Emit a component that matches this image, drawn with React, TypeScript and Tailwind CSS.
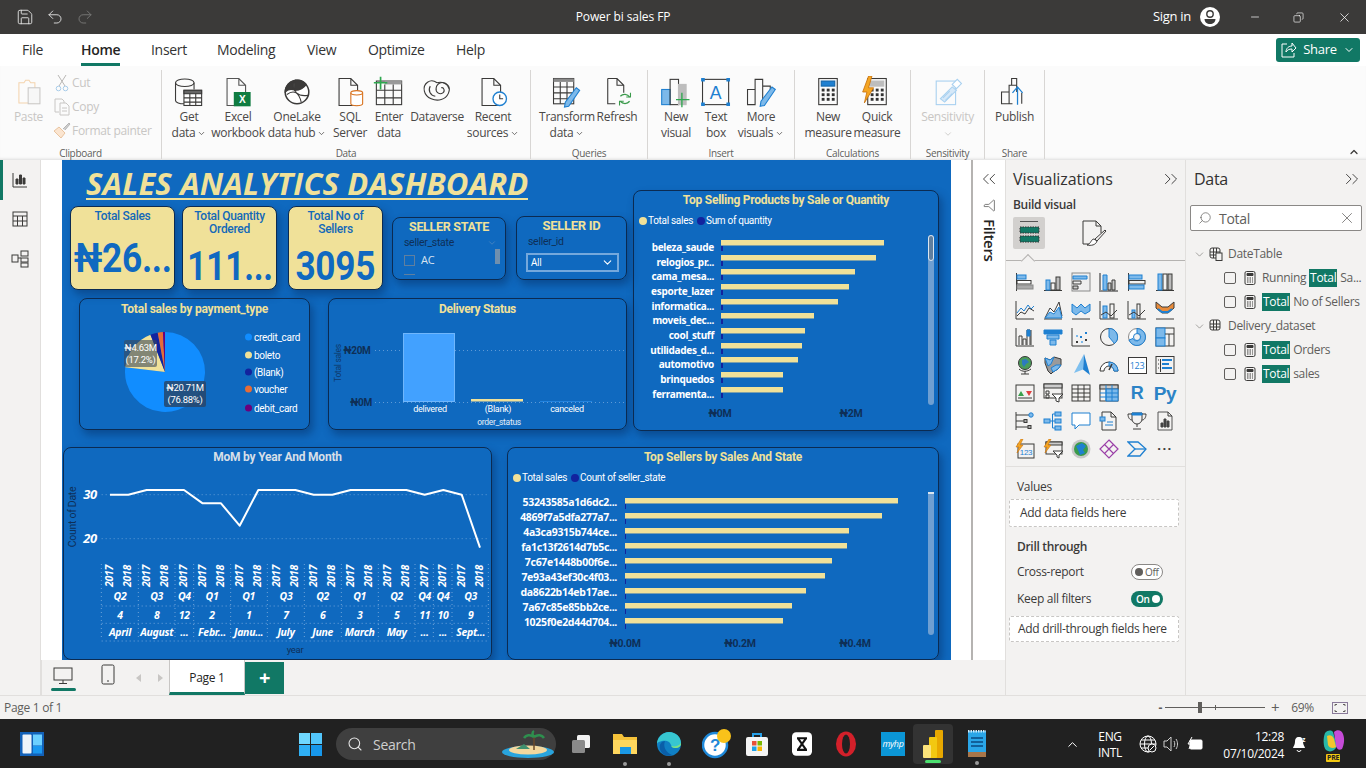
import React from "react";
import { ChevronDown, ChevronUp, ChevronsLeft, ChevronsRight, Copy, Funnel, Minus, Redo2, Save, Search, Undo2, X } from "lucide-react";

const D = "#3b3a39", B = "#1f80d1", L = "#7db9ea";

/* ---------- ribbon icons ---------- */
const S = ({ children, w = 32, h = 32, vb = "0 0 38 38", className = "" }: any) => (
  <svg width={w} height={h} viewBox={vb} fill="none" stroke={D} strokeWidth="1.300" className={className}>{children}</svg>
);
const FileOutline = ({ c = D }: any) => <path d="M6 3h14l8 8v24H6z M20 3v8h8" stroke={c} />;
const GetData = () => (
  <S>
    <ellipse cx="14" cy="8" rx="11" ry="4.500" />
    <path d="M3 8v21c0 2.500 5 4 10 4" />
    <path d="M25 8v8" />
    <rect x="13" y="17" width="21" height="18" fill="#fff" />
    <rect x="13" y="17" width="21" height="4" fill="#666" />
    <path d="M13 26h21M13 31h21M20 21v14M27 21v14" />
  </S>
);
const Excel = () => (
  <S>
    <FileOutline c="#555" />
    <rect x="14" y="19" width="20" height="17" fill="#107c41" stroke="none" />
    <text x="24" y="32" fontSize="12" fontWeight="700" fill="#fff" stroke="none" textAnchor="middle" fontFamily="Liberation Sans">X</text>
  </S>
);
const OneLake = () => (
  <S>
    <circle cx="19" cy="19" r="14" fill="#fff" strokeWidth="1.800" />
    <path d="M5 19A14 14 0 0 1 17 5c-3 5-2 9 0 12-5-2-9-1-12 2z" fill="#3b3a39" />
    <path d="M17 5c5-1 10 1 13 5-4 6-9 7-13 7 0 0-3-6 0-12z" fill="#3b3a39" />
    <path d="M13 8c2 10 6 17 19 15M7 22c8-6 14-3 17 9" />
  </S>
);
const Sql = () => (
  <S>
    <FileOutline c="#3b3a39" />
    <path d="M20 20v13c0 3 14 3 14 0V20" fill="#fff" stroke="#d9731f" />
    <ellipse cx="27" cy="20" rx="7" ry="2.600" fill="#fff" stroke="#d9731f" />
  </S>
);
const EnterData = () => (
  <S>
    <rect x="4" y="6" width="30" height="28" />
    <rect x="14" y="6" width="20" height="4" fill="#9a9a9a" stroke="none" />
    <path d="M4 17h30M4 26h30M14 10v24M24 10v24" />
    <path d="M9 1v15M1 8h16" stroke="#2fa84f" strokeWidth="2" />
  </S>
);
const Dataverse = () => (
  <S>
    <path d="M19 8c-8-6-17 1-15 10 2 9 13 12 20 10 8-2 12-12 8-17-5-6-13-3-14 3-1 5 4 9 8 6 3-2 1-7-2-6" />
    <path d="M19 8c6-2 13 1 14 7M11 12c-3 5 0 11 6 12" />
  </S>
);
const Recent = () => (
  <S>
    <FileOutline />
    <circle cx="27" cy="27" r="8" fill="#fff" stroke={B} strokeWidth="1.600" />
    <path d="M27 22v5h4" />
  </S>
);
const Transform = () => (
  <S>
    <rect x="3" y="3" width="24" height="30" />
    <rect x="3" y="3" width="24" height="4" fill="#8a8a8a" stroke="none" />
    <path d="M3 13h24M3 20h24M3 27h24M11 7v26M19 7v26" />
    <path d="M30 14l4 3-13 19-5 1 1-6z" fill={L} stroke={B} />
  </S>
);
const Refresh = () => (
  <S>
    <path d="M8 3h11l8 8v9 M8 3v30h9 M19 3v8h8" />
    <path d="M23 24a7 7 0 0 1 11 1M34 30a7 7 0 0 1-11 0" stroke="#3a9a4b" strokeWidth="1.500" />
    <path d="M35 20v5h-5M22 35v-5h5" stroke="#3a9a4b" />
  </S>
);
const NewVisual = () => (
  <S>
    <rect x="2" y="16" width="10" height="18" fill={L} stroke={B} />
    <rect x="12" y="4" width="10" height="30" />
    <rect x="22" y="10" width="9" height="24" fill="#bdbdbd" stroke="#bdbdbd" />
    <path d="M26 20v17M19 28h16" stroke="#2fa84f" strokeWidth="1.600" />
  </S>
);
const TextBox = () => (
  <S>
    <rect x="3" y="4" width="31" height="30" />
    <path d="M2 3h3v3H2zM32 3h3v3h-3zM2 32h3v3H2zM32 32h3v3h-3z" fill={B} stroke={B} />
    <text x="18.500" y="27" fontSize="21" fill={B} stroke="none" textAnchor="middle" fontFamily="Liberation Sans">A</text>
  </S>
);
const MoreVisuals = () => (
  <S>
    <path d="M3 34V16h9v18zM12 34V4h9v30M21 34V12h9v8" />
    <path d="M32 13l4 3-13 19-5 1 1-6z" fill={L} stroke={B} />
  </S>
);
const Calc = ({ top = B, flash = false }: any) => (
  <S>
    <rect x="8" y="3" width="22" height="31" />
    <rect x="11" y="6" width="16" height="6" fill={top} stroke={top === B ? "#1565a8" : top} />
    {[15, 20.500, 26].map((y) => [11.500, 17.500, 23.500].map((x) => <rect key={x + "-" + y} x={x} y={y} width="3.400" height="3.400" fill="#333" stroke="none" />))}
    {flash && <path d="M9 0l-7 19h5l-3 13 11-18h-6l4-14z" fill="#f5a623" stroke="#c9720e" strokeWidth="1" />}
  </S>
);
const Sensitivity = () => (
  <S>
    <rect x="5" y="6" width="23" height="28" stroke="#a9d1f0" />
    <path d="M10 27l14-14 5 4-14 14z" fill="#d5e8f8" stroke="#a9d1f0" />
    <path d="M24 10l6-6 5 5-6 6z" fill="#fff" stroke="#a9d1f0" />
    <path d="M13 26l8-8M16 29l8-8" stroke="#a9d1f0" />
  </S>
);
const Publish = () => (
  <S>
    <path d="M3 33V19h9v14zM12 19V11h9v8M12 33h4M21 11V3h-6v8M27 33V20" />
    <path d="M22 34V14M16 20l6-7 6 7" stroke={B} strokeWidth="1.500" />
  </S>
);

const Chev = () => <ChevronDown size={9} strokeWidth={2} className="inline ml-0.5" />;
const RBtn = ({ w, icon, l1, l2, caret, muted }: any) => (
  <div className={`flex flex-col items-center shrink-0 ${w}`}>
    <div className="h-[33px] flex items-center justify-center">{icon}</div>
    <div className={`text-[12px] leading-[16px] mt-[1px] whitespace-nowrap ${muted ? "text-[#c8c6c4]" : "text-[#4a4847]"}`}>{l1}</div>
    <div className={`text-[12px] leading-[16px] whitespace-nowrap ${muted ? "text-[#c8c6c4]" : "text-[#4a4847]"}`}>{l2}{caret && <Chev />}</div>
  </div>
);
const Group = ({ w, pad, label, children }: any) => (
  <div className={`shrink-0 flex flex-col border-r border-[#d8d6d4] h-[89px] ${w}`}>
    <div className={`flex flex-1 pt-[5px] ${pad}`}>{children}</div>
    <div className="text-[10px] leading-[12px] text-[#605e5c] text-center">{label}</div>
  </div>
);

const ClipRow = ({ icon, children }: any) => (
  <div className="flex items-center h-[19px] text-[12px] text-[#c8c6c4] whitespace-nowrap">
    <span className="w-[21px] flex justify-center">{icon}</span>{children}
  </div>
);

const Ribbon = () => (
  <div className="relative h-[94px] bg-[#fbfbfb] flex items-start pt-[4px] shadow-[inset_0_-3px_3px_-2px_rgba(0,0,0,0.12)]">
    <Group w="w-[162px]" pad="" label="Clipboard">
      <div className="w-[51px] flex flex-col items-center pl-[6px] shrink-0">
        <div className="h-[33px] flex items-center">
          <svg width="28" height="32" viewBox="0 0 30 38" fill="none">
            <path d="M3 8h6l2-3h4l2 3h5v24H3z" stroke="#f4d3ad" strokeWidth="1.200" />
            <rect x="14" y="14" width="14" height="19" fill="#f7f7f7" stroke="#c8c6c4" strokeWidth="1.200" />
          </svg>
        </div>
        <span className="text-[12px] leading-[16px] mt-[1px] text-[#c8c6c4]">Paste</span>
      </div>
      <div className="flex flex-col -mt-[2px] gap-[5px]">
        <ClipRow icon={<svg width="14" height="18" viewBox="0 0 14 18" fill="none"><path d="M3 1l7 11M11 1L4 12" stroke="#b9b7b5" /><circle cx="3.500" cy="14.500" r="2.300" stroke="#a9cdea" /><circle cx="10.500" cy="14.500" r="2.300" stroke="#a9cdea" /></svg>}>Cut</ClipRow>
        <ClipRow icon={<svg width="16" height="18" viewBox="0 0 16 18" fill="none" stroke="#c8c6c4"><path d="M1 1h7l2 2v2M1 1v13h4" /><path d="M6 5h6l3 3v9H6z M8 10h5M8 13h5" /></svg>}>Copy</ClipRow>
        <ClipRow icon={<svg width="18" height="17" viewBox="0 0 18 17" fill="none"><path d="M1 9l7 7 4-5-6-6z" fill="#fbe5d0" stroke="#e9c4a0" /><path d="M10 7l6-6 1 1-5 6" fill="#cfcfcf" stroke="#b5b5b5" /></svg>}>Format painter</ClipRow>
      </div>
    </Group>
    <Group w="w-[369px]" pad="pl-[5px]" label="Data">
      <RBtn w="w-[44px]" icon={<GetData />} l1="Get" l2="data" caret />
      <RBtn w="w-[54px]" icon={<Excel />} l1="Excel" l2="workbook" />
      <RBtn w="w-[64px]" icon={<OneLake />} l1="OneLake" l2="data hub" caret />
      <RBtn w="w-[42px]" icon={<Sql />} l1="SQL" l2="Server" />
      <RBtn w="w-[36px]" icon={<EnterData />} l1="Enter" l2="data" />
      <RBtn w="w-[60px]" icon={<Dataverse />} l1="Dataverse" l2="" />
      <RBtn w="w-[52px]" icon={<Recent />} l1="Recent" l2="sources" caret />
    </Group>
    <Group w="w-[117px]" pad="pl-[6px]" label="Queries">
      <RBtn w="w-[60px]" icon={<Transform />} l1="Transform" l2="data" caret />
      <RBtn w="w-[40px]" icon={<Refresh />} l1="Refresh" l2="" />
    </Group>
    <Group w="w-[147px]" pad="pl-[8px]" label="Insert">
      <RBtn w="w-[40px]" icon={<NewVisual />} l1="New" l2="visual" />
      <RBtn w="w-[40px]" icon={<TextBox />} l1="Text" l2="box" />
      <RBtn w="w-[50px]" icon={<MoreVisuals />} l1="More" l2="visuals" caret />
    </Group>
    <Group w="w-[116px]" pad="pl-[10px]" label="Calculations">
      <RBtn w="w-[46px]" icon={<Calc />} l1="New" l2="measure" />
      <RBtn w="w-[52px]" icon={<Calc top="#bdbdbd" flash />} l1="Quick" l2="measure" />
    </Group>
    <Group w="w-[74px]" pad="" label="Sensitivity">
      <RBtn w="w-full" icon={<Sensitivity />} l1="Sensitivity" l2={<ChevronDown size={10} className="inline" />} muted />
    </Group>
    <Group w="w-[60px]" pad="" label="Share">
      <RBtn w="w-full" icon={<Publish />} l1="Publish" l2="" />
    </Group>
    <ChevronUp size={12} strokeWidth={2.500} className="absolute right-[6px] bottom-[2px] text-[#3b3a39]" />
  </div>
);

/* ---------- title and tabs ---------- */
const TitleBar = () => (
  <div className="h-[34px] bg-[#3b3a39] flex items-center text-white shrink-0 relative">
    <div className="w-[500px] flex items-center pl-[16px] gap-[12px]">
      <Save size={18} strokeWidth={1.200} className="text-[#e5e5e5]" />
      <Undo2 size={18} strokeWidth={1.200} className="text-[#e5e5e5]" />
      <Redo2 size={18} strokeWidth={1.200} className="text-[#7b7a79]" />
    </div>
    <div className="w-[246px] text-center text-[12px] tracking-[-0.1px]">Power bi sales FP</div>
    <div className="flex-1 flex items-center justify-end">
      <span className="text-[13px]">Sign in</span>
      <svg width="20" height="20" viewBox="0 0 20 20" className="ml-[9px] mr-[29px]"><circle cx="10" cy="10" r="10" fill="#fff" /><circle cx="10" cy="7" r="3.200" fill="none" stroke="#3b3a39" strokeWidth="1.400" /><path d="M4.500 12h11c0 3-2.500 5-5.500 5s-5.500-2-5.500-5z" fill="#3b3a39" /></svg>
      <Minus size={12} className="mr-[32px]" strokeWidth={1.400} />
      <Copy size={11} className="mr-[33px] -scale-x-100" strokeWidth={1.400} />
      <X size={15} className="mr-[14px]" strokeWidth={1.200} />
    </div>
  </div>
);
const Tabs = () => {
  const items: [string, string][] = [["File", "w-[81px] pl-[22px]"], ["Home", "w-[70px]"], ["Insert", "w-[66px]"], ["Modeling", "w-[90px]"], ["View", "w-[61px]"], ["Optimize", "w-[88px]"], ["Help", "w-[60px]"]];
  return (
    <div className="h-[32px] bg-white flex items-center shrink-0 relative">
      {items.map(([t, w]) => (
        <div key={t} className={`${w} h-full flex items-center`}>
          <span className={`relative text-[14px] text-[#333] leading-[32px] ${t === "Home" ? "font-semibold text-[#252423]" : ""}`}>
            {t}
            {t === "Home" && <span className="absolute left-0 right-0 bottom-[0px] h-[3px] bg-[#117865]" />}
          </span>
        </div>
      ))}
      <div className="ml-auto mr-[6px] w-[84px] h-[24px] rounded-[3px] bg-[#117865] text-white flex items-center justify-center gap-[6px] text-[13px]">
        <svg width="16" height="16" viewBox="0 0 16 16" fill="none" stroke="#fff" strokeWidth="1"><path d="M6 2H1v13h12v-4" /><path d="M5 10c0-4 3-6 6-6V1l4 5-4 4V7c-3 0-5 1-6 3z" /></svg>
        Share<ChevronDown size={12} />
      </div>
    </div>
  );
};

/* ---------- left nav ---------- */
const LeftNav = () => (
  <div className="w-[41px] shrink-0 bg-[#f3f2f1] border-r border-[#e1dfdd] flex flex-col items-center relative">
    <div className="absolute left-0 top-0 w-[3px] h-[40px] bg-[#117865]" />
    <svg width="16" height="16" viewBox="0 0 16 16" fill="none" stroke={D} className="mt-[12px]"><path d="M1 1v14h14" /><path d="M4 12V7h2v5zM7.500 12V3h2v9zM11 12V6h2v6z" fill={D} /></svg>
    <svg width="16" height="16" viewBox="0 0 16 16" fill="none" stroke={D} className="mt-[23px]"><rect x="1" y="1" width="14" height="14" /><path d="M1 5h14M1 10h14M5.500 5v10M10.500 5v10" /></svg>
    <svg width="18" height="18" viewBox="0 0 18 18" fill="none" stroke={D} className="mt-[23px]"><rect x="1" y="5" width="6" height="7" /><rect x="10" y="1" width="7" height="5" /><rect x="10" y="8" width="7" height="4" /><rect x="10" y="13" width="7" height="4" /><path d="M7 8h3" /></svg>
  </div>
);

/* ---------- canvas ---------- */
const INK = "font-['Roboto',sans-serif]";
const mkT = (ox: number, oy: number) => ({ x, y, c, r, children }: any) => (
  <span
    className={`absolute whitespace-nowrap -translate-x-1/2 -translate-y-1/2 ${r ? "-rotate-90" : ""} ${c || ""}`}
    style={{ left: x - ox, top: y - oy }}
  >{children}</span>
);
const Visual = ({ cls, children }: any) => (
  <div className={`absolute border border-[#0b2b52] rounded-[8px] shadow-[3px_5px_8px_rgba(4,40,90,0.45)] ${cls}`}>{children}</div>
);

const Kpi = ({ cls, title, value, vcls }: any) => (
  <Visual cls={`bg-[#f0e199] flex flex-col ${cls}`}>
    <div className="text-[12px] leading-[13px] font-medium text-center text-[#1469b8] pt-[3px] h-[32px] font-['Roboto',sans-serif]">
      {title.map((t: string) => <div key={t}>{t}</div>)}
    </div>
    <div className="flex-1 flex items-center justify-center">
      <span className={`font-bold text-[#1069c0] text-[40px] leading-none whitespace-nowrap font-['Roboto',sans-serif] ${vcls}`}>{value}</span>
    </div>
  </Visual>
);

const Legend2 = ({ second }: any) => (
  <div className={`flex items-center text-[10px] text-white ${INK}`}>
    <span className="w-[8px] h-[8px] rounded-full bg-[#f0e199] mr-[1px]" /><span className="mr-[4px]">Total sales</span>
    <span className="w-[8px] h-[8px] rounded-full bg-[#12239e] mr-[1px]" /><span>{second}</span>
  </div>
);

const Pie = () => {
  const arc = (a0: number, a1: number, fill: string) => {
    const r = 40, cx = 41, cy = 41;
    const p = (a: number) => [cx + r * Math.sin((a * Math.PI) / 180), cy - r * Math.cos((a * Math.PI) / 180)];
    const [x0, y0] = p(a0), [x1, y1] = p(a1);
    return <path key={fill} d={`M${cx} ${cy}L${x0} ${y0}A${r} ${r} 0 ${a1 - a0 > 180 ? 1 : 0} 1 ${x1} ${y1}Z`} fill={fill} />;
  };
  return (
    <svg width="82" height="82" viewBox="0 0 82 82" className="absolute left-[44px] top-[32px]">
      {arc(0, 276.800, "#118dff")}{arc(276.800, 338.700, "#f0e199")}{arc(338.700, 349.500, "#12239e")}{arc(349.500, 357, "#e66c37")}{arc(357, 360, "#6b007b")}
    </svg>
  );
};

const PieCard = () => {
  const legend: [string, string, number][] = [["credit_card", "bg-[#118dff]", 337], ["boleto", "bg-[#f0e199]", 355], ["(Blank)", "bg-[#12239e]", 372], ["voucher", "bg-[#e66c37]", 389], ["debit_card", "bg-[#6b007b]", 408]];
  return (
    <Visual cls="left-[17px] top-[138px] w-[231px] h-[132px]">
      <div className={`text-center text-[12px] font-bold text-[#f0e199] leading-[20px] ${INK} tracking-[-0.2px]`}>Total sales by payment_type</div>
      <Pie />
      <div className={`absolute left-[44px] top-[41px] w-[33px] h-[27px] rounded-[2px] bg-[#3b4a5e]/60 text-white text-[9.500px] leading-[11.500px] text-center pt-[2px] ${INK}`}>₦4.63M<br />(17.2%)</div>
      <div className={`absolute left-[84px] top-[82px] w-[42px] h-[26px] rounded-[2px] bg-[#27476b]/85 text-white text-[9.500px] leading-[11.500px] text-center pt-[1px] ${INK}`}>₦20.71M<br />(76.88%)</div>
      {legend.map(([l, c, y]) => (
        <div key={l} className={`absolute flex items-center gap-[2px] -translate-y-1/2 text-white text-[10px] ${INK}`} style={{ left: 165, top: y - 299 }}>
          <span className={`w-[7px] h-[7px] rounded-full ${c}`} />{l}
        </div>
      ))}
    </Visual>
  );
};

const DeliveryCard = () => {
  const T = mkT(329, 299);
  return (
    <Visual cls="left-[266px] top-[138px] w-[299px] h-[132px]">
      <div className={`text-center text-[12px] font-bold text-[#f0e199] leading-[20px] ${INK}`}>Delivery Status</div>
      <svg width="297" height="130" className="absolute left-0 top-0" fill="none">
        <path d="M46 51.500H296M46 103.500H296" stroke="#5f9ad6" strokeDasharray="1 3" />
      </svg>
      <span className="absolute left-[74px] top-[34px] w-[52px] h-[69px] bg-[#42a1ff] border border-[#6fb6fc]" />
      <span className="absolute left-[142px] top-[100px] w-[52px] h-[3px] bg-[#f0e199] border-b border-[#84a4ad]" />
      <span className="absolute left-[211px] top-[102px] w-[52px] h-[1px] bg-[#2384e0]" />
      <T x={357} y={350} c={`font-bold text-[10px] text-[#0e2f57] ${INK}`}>₦20M</T>
      <T x={361} y={402} c={`font-bold text-[10px] text-[#0e2f57] ${INK}`}>₦0M</T>
      <T x={338} y={363} r c={`text-[8.500px] text-[#0e3a6c] ${INK}`}>Total sales</T>
      <T x={430} y={410} c={`text-[9px] text-white ${INK}`}>delivered</T>
      <T x={498} y={410} c={`text-[9px] text-white ${INK}`}>(Blank)</T>
      <T x={567} y={410} c={`text-[9px] text-white ${INK}`}>canceled</T>
      <T x={499} y={422} c={`text-[8.500px] text-[#e3edf7] ${INK}`}>order_status</T>
    </Visual>
  );
};

const prods: [string, number][] = [["beleza_saude", 884], ["relogios_pr...", 876], ["cama_mesa...", 855], ["esporte_lazer", 849], ["informatica...", 838], ["moveis_dec...", 814], ["cool_stuff", 805], ["utilidades_d...", 802], ["automotivo", 798], ["brinquedos", 783], ["ferramenta...", 783]];
const sellers: [string, number][] = [["53243585a1d6dc2...", 898], ["4869f7a5dfa277a7...", 882], ["4a3ca9315b744ce...", 849], ["fa1c13f2614d7b5c...", 847], ["7c67e1448b00f6e...", 832], ["7e93a43ef30c4f03...", 825], ["da8622b14eb17ae...", 806], ["7a67c85e85bb2ce...", 792], ["1025f0e2d44d704...", 783]];

const ProductsCard = () => {
  const T = mkT(634, 191);
  return (
    <Visual cls="left-[571px] top-[30px] w-[306px] h-[241px]">
      <div className={`text-center text-[12px] font-bold text-[#f0e199] leading-[19px] ${INK} tracking-[-0.25px]`}>Top Selling Products by Sale or Quantity</div>
      <div className="absolute left-[5px] top-[22px]"><Legend2 second="Sum of quantity" /></div>
      {prods.map(([l, end], i) => (
        <React.Fragment key={l}>
          <span className="absolute h-[6px] bg-[#f0e199] border-b border-[#7ea0a8]" style={{ left: 87, top: 49 + i * 14.670, width: end - 721 }} />
          <span className="absolute w-[2px] h-[5px] bg-[#12239e]" style={{ left: 87, top: 55 + i * 14.670 }} />
          <span className="absolute right-[224px] -translate-y-1/2 whitespace-nowrap text-white font-bold text-[10px] font-['Noto_Sans',sans-serif]" style={{ top: 56 + i * 14.670 }}>{l}</span>
        </React.Fragment>
      ))}
      <span className="absolute left-[294px] top-[44px] w-[6px] h-[170px] rounded-[3px] bg-[#6e9fd2]" />
      <span className="absolute left-[294px] top-[44px] w-[6px] h-[26px] rounded-[3px] bg-[#5f7f9f] border border-[#dbe6f0]" />
      <T x={720} y={414} c={`font-bold text-[10.500px] text-[#0e2f57] ${INK}`}>₦0M</T>
      <T x={851} y={414} c={`font-bold text-[10.500px] text-[#0e2f57] ${INK}`}>₦2M</T>
    </Visual>
  );
};

const SellersCard = () => {
  const T = mkT(508, 448);
  return (
    <Visual cls="left-[445px] top-[287px] w-[432px] h-[213px]">
      <div className={`text-center text-[12px] font-bold text-[#f0e199] leading-[19px] ${INK} tracking-[-0.2px]`}>Top Sellers by Sales And State</div>
      <div className="absolute left-[5px] top-[22px]"><Legend2 second="Count of seller_state" /></div>
      {sellers.map(([l, end], i) => (
        <React.Fragment key={l}>
          <span className="absolute h-[6px] bg-[#f0e199] border-b border-[#7ea0a8]" style={{ left: 117, top: 50 + i * 15, width: end - 625 }} />
          <span className="absolute w-[1px] h-[5px] bg-[#12239e]" style={{ left: 117, top: 56 + i * 15 }} />
          <span className="absolute right-[321px] -translate-y-1/2 whitespace-nowrap text-white font-bold text-[10.500px] font-['Noto_Sans',sans-serif]" style={{ top: 55 + i * 15 }}>{l}</span>
        </React.Fragment>
      ))}
      <span className="absolute left-[420px] top-[44px] w-[6px] h-[143px] rounded-[3px] bg-[#6e9fd2]" />
      <span className="absolute left-[420px] top-[44px] w-[6px] h-[2px] bg-[#dbe6f0]" />
      <T x={625} y={644} c={`font-bold text-[10.500px] text-[#0e2f57] ${INK}`}>₦0.0M</T>
      <T x={740} y={644} c={`font-bold text-[10.500px] text-[#0e2f57] ${INK}`}>₦0.2M</T>
      <T x={855} y={644} c={`font-bold text-[10.500px] text-[#0e2f57] ${INK}`}>₦0.4M</T>
    </Visual>
  );
};

const MomCard = () => {
  const ox = 64, oy = 448;
  const T = mkT(ox, oy);
  const xs = [150, 205, 260, 316, 372, 428, 483, 539, 595, 650, 706, 761, 817, 872, 928, 983, 1039, 1094, 1150, 1205, 1260];
  const ys = [164, 164, 150, 150, 150, 190, 190, 257, 150, 150, 150, 164, 164, 150, 150, 150, 150, 164, 150, 164, 323];
  const px = (v: number) => 60 + v / 3 - ox;
  const py = (v: number) => 440 + v / 3 - oy;
  const line = xs.map((x, i) => `${px(x)},${py(ys[i])}`).join(" ");
  const seps = [124, 235, 345, 401, 512, 622, 733, 844, 955, 1065, 1120, 1176, 1285];
  const yrs = ["2017", "2018", "2017", "2018", "2017", "2017", "2018", "2017", "2018", "2017", "2018", "2017", "2018", "2017", "2018", "2017", "2018", "2017", "2017", "2017", "2018"];
  const q: [string, number][] = [["Q2", 180], ["Q3", 290], ["Q4", 373], ["Q1", 456], ["Q1", 566], ["Q3", 678], ["Q2", 788], ["Q1", 899], ["Q2", 1010], ["Q4", 1094], ["Q4", 1149], ["Q3", 1232]];
  const n = ["4", "8", "12", "2", "1", "7", "6", "3", "5", "11", "10", "9"];
  const m = ["April", "August", "...", "Febr...", "Janu...", "July", "June", "March", "May", "...", "...", "Sept..."];
  const it = `italic font-bold text-white text-[10.500px] font-['Noto_Sans',sans-serif]`;
  return (
    <Visual cls="left-[1px] top-[287px] w-[429px] h-[213px]">
      <div className={`text-center text-[12px] font-bold text-[#d6dfe8] leading-[19px] ${INK} tracking-[-0.2px]`}>MoM by Year And Month</div>
      <svg width="427" height="211" className="absolute left-0 top-0" fill="none">
        <path d={`M${px(125)} ${py(164)}H${px(1285)}M${px(125)} ${py(296)}H${px(1285)}`} stroke="#5f9ad6" strokeDasharray="1 3" />
        {seps.map((s) => <path key={s} d={`M${px(s)} ${py(372)}V${py(600)}`} stroke="#6ea3da" strokeDasharray="1 3" />)}
        {[498, 550, 603].map((s) => <path key={s} d={`M${px(125)} ${py(s)}H${px(1285)}`} stroke="#6ea3da" strokeDasharray="1 3" />)}
        <polyline points={line} stroke="#fff" strokeWidth="2" strokeLinejoin="round" />
      </svg>
      <T x={90} y={495} c={`italic font-bold text-white text-[13px] font-['Noto_Sans',sans-serif]`}>30</T>
      <T x={90} y={539} c={`italic font-bold text-white text-[13px] font-['Noto_Sans',sans-serif]`}>20</T>
      <T x={73} y={517} r c={`text-[10.500px] text-[#0e2f57] ${INK}`}>Count of Date</T>
      {xs.map((x, i) => <T key={x} x={60 + x / 3} y={576} r c={it}>{yrs[i]}</T>)}
      {q.map(([t, x]) => <T key={x} x={60 + x / 3} y={597} c={it}>{t}</T>)}
      {q.map(([, x], i) => <T key={x} x={60 + x / 3} y={616} c={it}>{n[i]}</T>)}
      {q.map(([, x], i) => <T key={x} x={60 + x / 3} y={633} c={it}>{m[i]}</T>)}
      <T x={295} y={650} c={`text-[9.500px] text-[#0e2f57] ${INK}`}>year</T>
    </Visual>
  );
};

const Canvas = () => (
  <div className="flex-1 bg-white pl-[21px] pr-[20px]">
    <div className="relative w-[889px] h-[500px] bg-[#0f69bf] overflow-hidden">
      <div className="absolute left-[24px] top-[8px] text-[31px] leading-[30px] font-bold italic text-[#f0e199] border-b-[2px] border-[#f0e199] whitespace-nowrap font-['Open_Sans',sans-serif] tracking-[0.15px]">SALES ANALYTICS DASHBOARD</div>
      <Kpi cls="left-[8px] top-[46px] w-[105px] h-[84px]" title={["Total Sales"]} value="₦26..." vcls="scale-x-[0.88] -translate-y-[5px]" />
      <Kpi cls="left-[120px] top-[46px] w-[95px] h-[84px]" title={["Total Quantity", "Ordered"]} value="111..." vcls="scale-x-[0.84] pt-[6px]" />
      <Kpi cls="left-[226px] top-[46px] w-[95px] h-[84px]" title={["Total No of", "Sellers"]} value="3095" vcls="scale-x-[0.88] pt-[6px]" />
      <Visual cls="left-[330px] top-[57px] w-[114px] h-[63px]">
        <div className={`text-center text-[12.500px] font-bold text-[#f0e199] leading-[18px] ${INK}`}>SELLER STATE</div>
        <div className={`flex items-center justify-between pl-[11px] pr-[8px] text-[10.500px] leading-[14px] text-[#0e2f57] ${INK}`}>seller_state<ChevronDown size={10} className="text-[#4a85c0]" /></div>
        <div className="flex items-center gap-[6px] pl-[11px] mt-[3px] text-[11px] leading-[14px] text-[#d7e3ef]"><span className="w-[11px] h-[11px] border border-[#5f7f9f]" />AC</div>
        <span className="absolute left-[102px] top-[31px] w-[5px] h-[15px] bg-[#6f8fae]" />
        <span className="absolute left-[11px] top-[56px] w-[11px] h-[1px] bg-[#5f7f9f]" />
      </Visual>
      <Visual cls="left-[454px] top-[56px] w-[111px] h-[64px]">
        <div className={`text-center text-[13px] font-bold text-[#f0e199] leading-[18px] ${INK}`}>SELLER ID</div>
        <div className={`pl-[11px] text-[10.500px] text-[#0e2f57] leading-[13px] ${INK}`}>seller_id</div>
        <div className="ml-[9px] mt-[5px] w-[93px] h-[19px] border-2 border-[#74a8dc] flex items-center justify-between px-[3px] text-[10px] text-white">All<ChevronDown size={13} /></div>
      </Visual>
      <PieCard />
      <DeliveryCard />
      <ProductsCard />
      <MomCard />
      <SellersCard />
    </div>
  </div>
);

const Filters = () => (
  <div className="w-[34px] h-[500px] shrink-0 bg-white border-l-[2px] border-[#b5b3b1] flex flex-col items-center">
    <ChevronsLeft size={22} strokeWidth={1} className="mt-[8px] text-[#3b3a39]" />
    <Funnel size={13} strokeWidth={1.200} className="mt-[9px] rotate-90 text-[#3b3a39]" />
    <span className="mt-[7px] [writing-mode:vertical-rl] text-[15px] font-semibold text-[#252423] leading-none">Filters</span>
  </div>
);

/* ---------- viz gallery ---------- */
const V = ({ children }: any) => <svg width="20" height="20" viewBox="0 0 20 20" fill="none" stroke={D} strokeWidth="1">{children}</svg>;
const icons: React.ReactNode[] = [
  <V><path d="M1.500 1v18" /><rect x="2" y="3" width="9" height="4" stroke={B} fill={L} /><rect x="2" y="8.500" width="14" height="3.500" fill="#fff" /><rect x="2" y="13" width="16" height="4" fill="#aaa" stroke="#888" /></V>,
  <V><path d="M1 18.500h18" /><rect x="3" y="8" width="4" height="10" stroke={B} fill={L} /><rect x="8" y="11" width="4" height="7" /><rect x="13" y="5" width="4" height="13" fill="#bbb" /></V>,
  <V><rect x="1" y="1" width="18" height="18" stroke="#8a8a8a" fill="#eee" /><path d="M2 4h14v3H2z" fill={L} stroke={B} /><path d="M2 9h8v3H2z" /><path d="M2 14h5v3H2z" fill="#ccc" /></V>,
  <V><path d="M1 1v18h18" stroke="#8a8a8a" strokeWidth="2" /><path d="M4 3h4v15H4z" fill={L} stroke={B} /><path d="M9 11h3v7H9zM13 8h3v10h-3z" fill="#ccc" /></V>,
  <V><path d="M1.500 1v18" /><rect x="2" y="3" width="13" height="4" fill={L} stroke={B} /><rect x="2" y="8.500" width="16" height="3.500" /><rect x="2" y="13" width="15" height="4" fill={L} stroke={B} /></V>,
  <V><path d="M1 18.500h18" /><rect x="3" y="2" width="4" height="16" fill={L} stroke={B} /><rect x="8" y="2" width="4" height="16" /><rect x="13" y="2" width="4" height="16" fill="#bbb" /></V>,
  <V><path d="M1 1v18h18" /><path d="M2 13l4-5 3 3 4-6 3 4 3-3" stroke={B} /><path d="M2 16l4-4 4 2 4-6 5 3" /></V>,
  <V><path d="M1 19h18" /><path d="M2 18l5-10 4 4 5-10 3 14z" fill="#fff" /><path d="M2 18l5-6 4 2 5-7 3 11z" fill={L} stroke={B} /></V>,
  <V><path d="M1 4l5 4 4-4 4 4 5-4v7l-5 3-4-3-5 4-4-3z" fill={L} stroke={B} /><path d="M1 19h18" /></V>,
  <V><path d="M1 1v18h18" /><rect x="4" y="6" width="4" height="12" fill={L} stroke={B} /><rect x="11" y="4" width="4" height="14" /><path d="M2 15l5-3 5 4 6-6" /></V>,
  <V><path d="M1 1v18h18" /><rect x="5" y="10" width="3" height="8" fill={L} stroke={B} /><rect x="10" y="4" width="3" height="14" /><path d="M2 15l5-3 5 4 6-6" /></V>,
  <V><path d="M1 2l6 5 6 0 6-5v6l-6 5H7L1 8z" fill="#e98b3a" /><path d="M3 9l4 3h6l4-3" stroke={B} strokeWidth="2" /><path d="M1 19h18" /></V>,
  <V><path d="M1 1v18h18" /><path d="M4 18V9h3v9M8 18V12h3v6M12 18V3h3v15M16 18V3" /><path d="M12 3h3v6h-3z" fill={B} stroke={B} /></V>,
  <V><path d="M1 3h18v4H1z" fill={B} stroke={B} /><path d="M4 8h12v4H4z" fill={L} stroke={B} /><path d="M7 13h6v5H7z" fill={L} stroke={B} /></V>,
  <V><path d="M1 1v18h18" /><path d="M5 14h2v2H5z" fill={D} stroke="none" /><path d="M9 9h2v2H9zM14 5h2v2h-2z" fill={B} stroke="none" /><path d="M5 8h2v2H5zM10 14h2v2h-2z" fill={L} stroke="none" /><path d="M14 12h2v2h-2z" fill={D} stroke="none" /></V>,
  <V><circle cx="10" cy="10" r="8.500" /><path d="M10 1.500a8.500 8.500 0 0 1 5.500 15L10 10z" fill={L} stroke={B} /></V>,
  <V><circle cx="10" cy="10" r="8.500" fill="#fff" stroke="#8a8a8a" /><path d="M10 1.500a8.500 8.500 0 1 1-8 11.500l4-1.500a4 4 0 1 0 4-5.500z" fill={L} stroke={B} /><circle cx="10" cy="10" r="3.500" fill="#f3f2f1" stroke={B} /></V>,
  <V><rect x="1" y="1" width="18" height="18" /><rect x="1" y="1" width="9" height="10" fill={L} stroke={B} /><rect x="1" y="11" width="9" height="8" fill={L} stroke={B} /><path d="M10 7h9M14 7v12" /></V>,
  <V><circle cx="10" cy="8" r="6.500" fill="#4a9d5b" /><path d="M7 5l4-1 3 3-3 2-2 3-2-3z" fill="#2c7ac0" stroke="none" /><path d="M4 14c3 3 8 3 12 0M10 16v3M6 19h8" /></V>,
  <V><path d="M2 3l5 2 4-3 7 2v6l-3 4-5 3-2 2-3-3-3-8z" fill="#9a9a9a" /><path d="M8 13l5-3 5 0-3 4-5 3z" fill={L} stroke={B} /><path d="M2 3l3 8 3-2 3-7-4 3z" fill={L} stroke={B} /></V>,
  <svg width="20" height="24" viewBox="0 0 20 24"><path d="M13 1L3 20l9-3.500z" fill="#7fc0ef" /><path d="M13 1l6 21-7-5.500z" fill="#1f80d1" /></svg>,
  <V><path d="M1 16a9 9 0 0 1 18 0h-4a5 5 0 0 0-10 0z" fill="#fff" /><path d="M10 7a9 9 0 0 1 9 9h-4a5 5 0 0 0-5-5z" fill={L} stroke={B} /><path d="M10 15l3-6" strokeWidth="1.500" /></V>,
  <div className="w-[19px] h-[17px] border border-[#3b3a39] bg-white flex items-center justify-center text-[9px] tracking-[-0.3px] text-[#1f80d1] leading-none">123</div>,
  <V><rect x="1" y="1.500" width="18" height="17" /><path d="M3 5h1M3 9h1M3 13h1" /><path d="M5.500 4v13" /><path d="M7 5h10M7 9h7M7 13h10" stroke={B} strokeWidth="2" /></V>,
  <V><rect x="1" y="2" width="18" height="16" /><path d="M3 13l3-5 3 5z" fill="#3aa04c" stroke="none" /><path d="M11 8h6l-3 5z" fill="#e04040" stroke="none" /><path d="M3 15h14" /></V>,
  <V><rect x="1" y="1" width="18" height="14" /><rect x="1" y="1" width="18" height="4" fill="#ccc" /><path d="M3 8h3v3H3zM3 12h3v3H3z" /><path d="M9 11h11l-4 4v4l-3-1v-3z" fill="#fff" /></V>,
  <V><rect x="1" y="2" width="18" height="16" /><path d="M1 6h18M1 10h18M1 14h18M7 2v16M13 2v16" /></V>,
  <V><rect x="1" y="2" width="18" height="16" /><rect x="1" y="2" width="18" height="4" fill="#c8c8c8" /><path d="M7 6h12v12H7z" fill={L} stroke={B} /><path d="M1 10h18M1 14h18M7 2v16M13 2v16" stroke={B} /></V>,
  <span className="text-[18px] font-bold leading-none text-[#2b83c6] font-['Liberation_Sans',sans-serif]">R</span>,
  <span className="text-[19px] font-bold leading-none text-[#2b83c6] font-['Liberation_Sans',sans-serif]">Py</span>,
  <V><path d="M1 1v18M1 4h13M1 10h8M1 16h12" /><circle cx="16" cy="4" r="2.200" fill={L} stroke={B} /><rect x="9" y="8.500" width="3" height="3" fill="#aaa" /><rect x="13" y="14.500" width="3" height="3" fill="#aaa" /></V>,
  <V><rect x="1" y="8" width="6" height="4" fill={L} stroke={B} /><rect x="12" y="1" width="6" height="4" fill={L} stroke={B} /><rect x="12" y="8" width="6" height="4" fill={L} stroke={B} /><rect x="12" y="15" width="6" height="4" fill={L} stroke={B} /><path d="M7 10h5M9.500 3v14M9.500 3H12M9.500 17H12" stroke={B} /></V>,
  <V><path d="M1 2h18v12H8l-4 4v-4H1z" stroke={B} fill="#fff" /></V>,
  <V><path d="M3 1h9l5 5v13H3z M12 1v5h5" /><rect x="1" y="6" width="5" height="4" fill={L} stroke={B} /><path d="M8 11h6M6 14h8" stroke={B} /></V>,
  <V><path d="M5 2h10v6a5 5 0 0 1-10 0z" /><path d="M5 3H1c0 4 2 6 4 6M15 3h4c0 4-2 6-4 6M10 13v3M6 18h8" /><path d="M5 2h10v2H5z" fill={B} stroke={B} /></V>,
  <V><path d="M3 1h10l4 4v14H3z" stroke="#555" /><path d="M13 1v4h4" /><path d="M6 16v-4h2v4zM9 16V8h2v8zM12 16v-6h2v6z" fill="#444" stroke="#444" /></V>,
  <V><rect x="3" y="5" width="16" height="14" /><text x="11" y="16" fontSize="8" fill={B} stroke="none" textAnchor="middle" fontFamily="Liberation Sans">123</text><path d="M6 0L1 8h3l-2 6 6-8H5l3-6z" fill="#f5a623" stroke="#c9720e" strokeWidth=".6" /></V>,
  <V><rect x="3" y="3" width="16" height="12" /><rect x="3" y="3" width="16" height="3" fill="#ccc" /><path d="M10 12h10l-4 4v3l-2-1v-2z" fill="#fff" /><path d="M6 0L1 8h3l-2 6 6-8H5l3-6z" fill="#f5a623" stroke="#c9720e" strokeWidth=".6" /></V>,
  <svg width="20" height="20" viewBox="0 0 20 20"><circle cx="10" cy="10" r="9.500" fill="#c8c8c8" /><circle cx="10" cy="10" r="7" fill="#3a9a4b" /><path d="M5 7l6-3 4 3-3 4 2 3-5 2-2-5z" fill="#1f80d1" /></svg>,
  <svg width="20" height="20" viewBox="0 0 20 20" fill="none" stroke="#9b3fa8" strokeWidth="1.200"><path d="M10 1l9 9-9 9-9-9z" /><path d="M5.500 5.500l9 9M14.500 5.500l-9 9" /></svg>,
  <svg width="20" height="20" viewBox="0 0 20 20" fill="none" stroke={B} strokeWidth="1.300"><path d="M1 3h10l8 7-6 7H1l7-7z" /><path d="M8 10h11" /></svg>,
  <span className="text-[13px] font-bold tracking-[1.500px] leading-none text-[#3b3a39] -mt-[6px]">...</span>,
];

const BuildIcon = () => (
  <svg width="28" height="28" viewBox="0 0 28 28" fill="none">
    <path d="M5 2.500h18" stroke="#555" />
    <rect x="5" y="8" width="19" height="6" fill="#117865" stroke="#333" strokeDasharray="1.500 1" />
    <rect x="5" y="17" width="19" height="6" fill="#117865" stroke="#333" strokeDasharray="1.500 1" />
  </svg>
);
const FormatIcon = () => (
  <svg width="28" height="28" viewBox="0 0 28 28" fill="none" stroke={D}>
    <path d="M3 2h13l5 5v7 M3 2v23h6 M16 2v5h5" />
    <path d="M25 11L15 20l2 2 9-10z" />
    <path d="M14 20c-3 0-3 5-7 6 4 1 9 0 10-4z" fill="#fff" />
  </svg>
);

const Toggle = ({ on }: any) =>
  on ? (
    <span className="w-[32px] h-[16px] rounded-full bg-[#117865] text-white text-[10px] font-semibold flex items-center justify-between pl-[5px] pr-[3px]">On<span className="w-[8px] h-[8px] rounded-full bg-white" /></span>
  ) : (
    <span className="w-[32px] h-[16px] rounded-full bg-white border border-[#8a8886] text-[#605e5c] text-[10px] flex items-center gap-[2px] pl-[3px]"><span className="w-[8px] h-[8px] rounded-full bg-[#605e5c]" />Off</span>
  );

const VizPane = () => (
  <div className="w-[181px] shrink-0 bg-[#f3f2f1] border-x border-[#e1dfdd] flex flex-col text-[#333]">
    <div className="flex items-center justify-between pl-[7px] pr-[3px] h-[38px]">
      <span className="text-[16px] font-medium text-[#323130] tracking-[-0.1px]">Visualizations</span>
      <ChevronsRight size={22} strokeWidth={1} />
    </div>
    <div className="pl-[7px] text-[12px] font-semibold leading-[14px] text-[#3b3a39]">Build visual</div>
    <div className="flex pl-[7px] mt-[5px] h-[32px] items-center">
      <div className="w-[32px] h-[32px] bg-[#d2d0ce] rounded-[2px] flex items-center justify-center"><BuildIcon /></div>
      <div className="ml-[35px]"><FormatIcon /></div>
    </div>
    <div className="relative h-[12px] border-b border-[#b5b3b1]">
      <span className="absolute left-[17px] top-[7px] w-[10px] h-[10px] rotate-45 bg-[#f3f2f1] border-l border-t border-[#b5b3b1]" />
    </div>
    <div className="grid grid-cols-[repeat(6,28px)] auto-rows-[27.800px] pl-[5px] pt-[7px] h-[206px] border-b border-[#e1dfdd] items-center justify-items-center">
      {icons.map((ic, i) => <div key={i} className="flex items-center justify-center">{ic}</div>)}
    </div>
    <div className="pl-[3px] pr-[6px] flex flex-col text-[12px] text-[#3b3a39]">
      <div className="pl-[8px] pt-[12px] leading-[16px]">Values</div>
      <div className="mt-[4px] h-[28px] bg-white border border-dashed border-[#c8c6c4] rounded-[2px] flex items-center pl-[10px]">Add data fields here</div>
      <div className="pl-[8px] mt-[12px] leading-[16px] font-semibold">Drill through</div>
      <div className="pl-[8px] pr-[16px] mt-[9px] h-[16px] flex items-center justify-between">Cross-report<Toggle /></div>
      <div className="pl-[8px] pr-[16px] mt-[11px] h-[16px] flex items-center justify-between">Keep all filters<Toggle on /></div>
      <div className="mt-[9px] h-[26px] bg-white border border-dashed border-[#c8c6c4] rounded-[2px] flex items-center pl-[8px]">Add drill-through fields here</div>
    </div>
  </div>
);

const CalcSmall = () => (
  <svg width="12" height="14" viewBox="0 0 12 14" fill="none" stroke="#3b3a39"><rect x="1" y=".5" width="10" height="13" rx="1.500" /><path d="M3 2.500h6v2H3z" fill="#3b3a39" /><path d="M3 7h1.500M5.500 7H7M8 7h1M3 9h1.500M5.500 9H7M8 9h1M3 11h1.500M5.500 11H7M8 11h1" /></svg>
);
const Hl = () => <span className="inline-block bg-[#117865] text-white px-[1px] leading-[18px]">Total</span>;
const Field = ({ children }: any) => (
  <div className="flex items-center h-[24px] pl-[38px] whitespace-nowrap overflow-hidden">
    <span className="w-[12px] h-[12px] border border-[#605e5c] rounded-[2px] shrink-0 bg-[#f3f2f1]" />
    <span className="ml-[8px] mr-[6px] flex"><CalcSmall /></span>
    <span className="text-[12px] text-[#605e5c] leading-[18px]">{children}</span>
  </div>
);
const Tree = ({ label, calc }: any) => (
  <div className="flex items-center h-[24px] pl-[7px] text-[12px] text-[#605e5c]">
    <ChevronDown size={13} strokeWidth={1} className="text-[#605e5c]" />
    <svg width="14" height="14" viewBox="0 0 14 14" fill="none" stroke="#3b3a39" className="ml-[3px] mr-[5px]"><rect x="1" y="1" width="10" height="10" rx="2" /><path d="M1 5h10M1 8h10M4.500 1v10M7.500 1v10" />{calc && <rect x="7" y="6" width="6" height="7.500" fill="#f3f2f1" />}</svg>
    {label}
  </div>
);
const DataPane = () => (
  <div className="flex-1 bg-[#f3f2f1] flex flex-col">
    <div className="flex items-center justify-between pl-[8px] pr-[3px] h-[38px]">
      <span className="text-[16px] font-medium text-[#323130]">Data</span>
      <ChevronsRight size={22} strokeWidth={1} className="text-[#3b3a39]" />
    </div>
    <div className="mx-[4px] mt-[7px] h-[26px] bg-white border border-[#8a8886] rounded-[2px] flex items-center pl-[7px] pr-[5px] text-[14px] text-[#605e5c]">
      <Search size={14} strokeWidth={1.200} className="-scale-x-100 mr-[7px]" />Total<X size={18} strokeWidth={1} className="ml-auto" />
    </div>
    <div className="mt-[11px]">
      <Tree label="DateTable" calc />
      <Field>Running <Hl /> Sa...</Field>
      <Field><Hl /> No of Sellers</Field>
      <Tree label="Delivery_dataset" />
      <Field><Hl /> Orders</Field>
      <Field><Hl /> sales</Field>
    </div>
  </div>
);

const PageTabs = () => (
  <div className="h-[35px] bg-[#f3f2f1] flex items-stretch border-l border-[#e1dfdd] relative">
    <div className="w-[127px] shrink-0 relative flex items-center">
      <svg width="20" height="18" viewBox="0 0 20 18" fill="none" stroke="#3b3a39" className="ml-[11px] -mt-[3px]"><rect x="1" y="1" width="18" height="12" /><path d="M10 13v3M6 16.500h8" /></svg>
      <svg width="14" height="21" viewBox="0 0 14 21" fill="none" stroke="#3b3a39" className="ml-[28px] -mt-[6px]"><rect x="1" y="1" width="12" height="19" rx="1.500" /><path d="M6 17h2" /></svg>
      <span className="absolute left-[9px] top-[28px] w-[25px] h-[3px] rounded bg-[#117865]" />
      <span className="absolute left-[94px] top-[14px] border-y-[4px] border-r-[5px] border-y-transparent border-r-[#c8c6c4]" />
      <span className="absolute left-[116px] top-[14px] border-y-[4px] border-l-[5px] border-y-transparent border-l-[#c8c6c4]" />
    </div>
    <div className="w-[76px] bg-white border-x border-[#c8c6c4] border-b-[3px] border-b-[#117865] flex items-center justify-center text-[12px] pt-[3px] text-[#252423]">Page 1</div>
    <div className="w-[39px] mt-[2px] mb-[1px] bg-[#117865] flex items-center justify-center text-white text-[20px] font-bold leading-none">+</div>
  </div>
);

const StatusBar = () => (
  <div className="h-[25px] shrink-0 bg-[#f3f2f1] border-t border-[#e1dfdd] border-b border-b-[#222] flex items-center text-[12px] text-[#605e5c] pl-[4px] relative">
    Page 1 of 1
    <div className="ml-auto flex items-center pr-[18px]">
      <span className="font-bold mr-[3px]">-</span>
      <div className="relative w-[100px] h-[1px] bg-[#605e5c]">
        <span className="absolute left-[33px] -top-[5px] w-[4px] h-[11px] bg-[#605e5c]" />
        <span className="absolute left-[50px] -top-[2px] w-[1px] h-[5px] bg-[#605e5c]" />
      </div>
      <span className="ml-[6px] text-[15px] leading-none">+</span>
      <span className="ml-[12px]">69%</span>
      <svg width="16" height="12" viewBox="0 0 16 12" fill="none" stroke="#605e5c" className="ml-[18px]"><rect x=".5" y=".5" width="15" height="11" stroke="#8a7a9a" /><path d="M3 4V2.500h2M11 2.500h2V4M3 8v1.500h2M11 9.500h2V8" /></svg>
    </div>
  </div>
);

/* ---------- taskbar ---------- */
const Dot = ({ cls }: any) => <span className={`absolute top-[31px] w-[4px] h-[4px] rounded-full bg-[#9a9a9a] ${cls}`} />;
const Task = () => (
  <div className="h-[48px] shrink-0 bg-[#212121] flex items-center text-white relative">
    <svg width="24" height="24" viewBox="0 0 24 24" className="ml-[20px]"><rect width="24" height="24" fill="#1261b8" /><rect x="2.500" y="2.500" width="9" height="19" rx="1" fill="#eef4fa" /><rect x="13" y="2.500" width="9" height="11" fill="#6cd0ff" /><rect x="13" y="14" width="9" height="7.500" fill="#1a98f0" /></svg>
    <svg width="23" height="23" viewBox="0 0 23 23" className="ml-[255px]"><rect width="11" height="11" fill="#6fd8ff" /><rect x="12" width="11" height="11" fill="#52c6fb" /><rect y="12" width="11" height="11" fill="#2fb0f5" /><rect x="12" y="12" width="11" height="11" fill="#1797ea" /></svg>
    <div className="ml-[14px] w-[220px] h-[32px] rounded-full bg-[#3f3f3f] flex items-center pl-[11px] text-[14px] text-[#cfcfcf] relative">
      <Search size={16} strokeWidth={1.600} className="text-[#e6e6e6] mr-[10px]" />Search
      <svg width="56" height="30" viewBox="0 0 56 30" className="absolute right-[0px] top-[1px]"><ellipse cx="28" cy="23" rx="26" ry="6" fill="#29a4dd" /><ellipse cx="28" cy="21" rx="19" ry="4.500" fill="#f2d79e" /><path d="M34 21V8" stroke="#6b4a2a" strokeWidth="1.500" /><path d="M34 8c-4-3-8-2-10 1M34 8c4-3 8-2 10 1M34 8c-2-2-2-5 0-6" stroke="#2e8f4e" strokeWidth="2.500" fill="none" /><path d="M16 20l8-5 6 5z" fill="#3f8f6e" /></svg>
    </div>
    <svg width="24" height="24" viewBox="0 0 24 24" className="ml-[13px]"><rect x="8" y="3" width="13" height="13" rx="1.500" fill="#f2f2f2" /><rect x="3" y="8" width="13" height="13" rx="1.500" fill="#8a8a8a" /></svg>
    <div className="ml-[19px] relative"><svg width="26" height="26" viewBox="0 0 26 26"><path d="M1 3h9l2 3h13v17H1z" fill="#f5c23a" /><path d="M1 9h24v14H1z" fill="#ffd75e" /><rect x="8" y="16" width="11" height="7" fill="#1a98e6" /></svg><Dot cls="left-[11px]" /></div>
    <div className="ml-[18px] relative"><svg width="26" height="26" viewBox="0 0 26 26"><circle cx="13" cy="13" r="12" fill="#0f7fc4" /><path d="M1 13C1 6 7 1 13 1c7 0 12 5 12 11 0 4-3 5-6 5-4 0-3-3-6-6-4-3-12 0-12 2z" fill="#37c6d0" /><path d="M6 22c-4-5-3-11 3-12-2 5 0 11 7 14-4 2-8 0-10-2z" fill="#0a5ea8" /><path d="M25 12c0 4-3 5-6 5-2 0-3-1-4-2 4 1 8 0 10-3z" fill="#7fe27e" /></svg><Dot cls="left-[11px]" /></div>
    <div className="ml-[20px] relative"><svg width="30" height="30" viewBox="0 0 30 30"><circle cx="13" cy="16" r="12" fill="#fff" stroke="#1e88d8" strokeWidth="2.500" /><text x="13" y="22" fontSize="17" fontWeight="700" fill="#1e88d8" textAnchor="middle" fontFamily="Liberation Sans">?</text><circle cx="22" cy="7" r="7" fill="#f9c21a" /></svg></div>
    <svg width="24" height="26" viewBox="0 0 24 26" className="ml-[13px]"><path d="M8 6V3h8v3" stroke="#27a0e8" strokeWidth="2" fill="none" /><rect x="1" y="6" width="22" height="19" rx="2" fill="#f4f4f4" /><rect x="7" y="10" width="4.500" height="4.500" fill="#e8503a" /><rect x="12.500" y="10" width="4.500" height="4.500" fill="#7cb800" /><rect x="7" y="15.500" width="4.500" height="4.500" fill="#1fa0e8" /><rect x="12.500" y="15.500" width="4.500" height="4.500" fill="#fab400" /></svg>
    <svg width="20" height="24" viewBox="0 0 24 28" className="ml-[23px]"><rect width="24" height="28" rx="5" fill="#fff" /><path d="M6 7h12M6 21h12M7 7l10 14M17 7L7 21" stroke="#111" strokeWidth="2.500" fill="none" /></svg>
    <svg width="22" height="26" viewBox="0 0 22 26" className="ml-[23px]"><ellipse cx="11" cy="13" rx="10" ry="12.500" fill="#d3202a" /><ellipse cx="11" cy="13" rx="4" ry="9.500" fill="#212121" /></svg>
    <div className="ml-[24px] w-[24px] h-[24px] bg-[#0b96d6] flex items-center justify-center text-[9px] italic text-white">myhp</div>
    <div className="ml-[8px] w-[40px] h-[40px] rounded-[4px] bg-[#333] flex items-center justify-center relative">
      <svg width="24" height="28" viewBox="0 0 24 28"><rect x="14" y="0" width="8" height="28" rx="1" fill="#e8a800" /><rect x="8" y="7" width="8" height="21" rx="1" fill="#f2c811" /><rect x="2" y="15" width="8" height="13" rx="1" fill="#fbe27a" /></svg>
      <span className="absolute left-[12px] bottom-[1px] w-[16px] h-[3px] rounded bg-[#4ce070]" />
    </div>
    <div className="ml-[14px] relative"><svg width="20" height="28" viewBox="0 0 20 28"><rect x="1" y="1" width="18" height="26" fill="#2aa6e8" /><path d="M1 1h18" stroke="#cfeaf8" strokeWidth="3" strokeDasharray="1.500 1" /><rect x="1" y="22" width="18" height="5" fill="#a8764a" /><path d="M4 8h12M4 12h12M4 16h12" stroke="#0a4a80" strokeWidth="1.500" /></svg><Dot cls="left-[8px]" /></div>
    <ChevronUp size={15} className="ml-[78px]" strokeWidth={1.600} />
    <div className="ml-[18px] mt-[2px] flex flex-col text-[12px] leading-[16px] items-center"><span>ENG</span><span>INTL</span></div>
    <svg width="18" height="18" viewBox="0 0 18 18" fill="none" stroke="#fff" className="ml-[17px]"><circle cx="9" cy="9" r="8" /><ellipse cx="9" cy="9" rx="3.500" ry="8" /><path d="M1 9h16M2 5h14M2 13h14" /><circle cx="13" cy="13" r="4" fill="#212121" /><path d="M11 15l4-4" /></svg>
    <svg width="18" height="16" viewBox="0 0 18 16" fill="none" stroke="#cfcfcf" className="ml-[6px]"><path d="M1 5h3l4-4v14l-4-4H1z" /><path d="M11 5c1 2 1 4 0 6M13 3c2 3 2 7 0 10" /></svg>
    <svg width="18" height="16" viewBox="0 0 18 16" fill="none" stroke="#fff" className="ml-[5px]"><rect x="4" y="4" width="12" height="9" rx="1" fill="#fff" /><path d="M6 1L2 8h3l-2 5" /></svg>
    <div className="ml-[12px] mt-[1px] w-[68px] flex flex-col items-end text-[12px] leading-[17px]"><span>12:28</span><span>07/10/2024</span></div>
    <svg width="16" height="18" viewBox="0 0 16 18" fill="none" className="ml-[7px]"><path d="M8 2c-3 0-4 2-4 5 0 3-2 5-2 6h12c0-1-2-3-2-6 0-3-1-5-4-5z" fill="#fff" /><path d="M6 15c0 2 4 2 4 0" stroke="#fff" /><text x="11" y="7" fontSize="7" fill="#fff" fontWeight="700" fontFamily="Liberation Sans">z</text></svg>
    <div className="ml-[14px] relative w-[26px] h-[30px]">
      <svg width="26" height="26" viewBox="0 0 26 26"><path d="M4 4c3-3 6-3 8-1l4 14c-2 5-7 7-11 4-3-3-3-12-1-17z" fill="#28b8a8" /><path d="M13 3c3-3 8-2 9 2 2 5 1 11-1 15-3 2-5 0-6-3z" fill="#c64bd8" /><path d="M6 7c3-2 6 0 7 3l2 8c-3 2-7 1-8-2z" fill="#f4c52d" /></svg>
      <span className="absolute left-[5px] bottom-[-3px] bg-[#f2c811] text-[#212121] text-[7px] font-bold leading-[8px] px-[1px] rounded-[1px]">PRE</span>
    </div>
  </div>
);

export default function App() {
  return (
    <div className="w-[1366px] h-[768px] overflow-hidden flex flex-col bg-[#f3f2f1] font-['Open_Sans',sans-serif] tracking-[-0.3px]">
      <TitleBar />
      <Tabs />
      <Ribbon />
      <div className="flex h-[535px] shrink-0">
        <LeftNav />
        <div className="w-[964px] shrink-0 flex flex-col">
          <div className="flex h-[500px] bg-white"><Canvas /><Filters /></div>
          <PageTabs />
        </div>
        <VizPane />
        <DataPane />
      </div>
      <StatusBar />
      <Task />
    </div>
  );
}
